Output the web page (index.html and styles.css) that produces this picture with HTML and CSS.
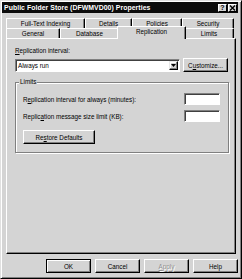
FILE: index.html
```html
<!DOCTYPE html>
<html>
<head>
<meta charset="utf-8">
<link rel="stylesheet" href="styles.css">
</head>
<body>
<div class="window">
  <div class="titlebar">
    <span class="title">Public Folder Store (DFWMVD00) Properties</span>
    <div class="tb-buttons">
      <span class="tb-btn">?</span>
      <span class="tb-btn close">
        <svg width="7" height="6" viewBox="0 0 7 6"><path d="M1 0.5 L6 5.5 M6 0.5 L1 5.5" stroke="#000" stroke-width="1.4"/></svg>
      </span>
    </div>
  </div>
  <div class="tabs">
    <div class="tab-row back">
      <div class="tab t-fti">Full-Text Indexing</div>
      <div class="tab t-det">Details</div>
      <div class="tab t-pol">Policies</div>
      <div class="tab t-sec">Security</div>
    </div>
    <div class="tab-row front">
      <div class="tab t-gen">General</div>
      <div class="tab t-db">Database</div>
      <div class="tab t-rep selected">Replication</div>
      <div class="tab t-lim">Limits</div>
    </div>
  </div>
  <div class="panel">
    <div class="label"><u>R</u>eplication interval:</div>
    <div class="combo-row">
      <div class="combo">
        <span class="combo-text">Always run</span>
        <span class="combo-btn"><svg width="5" height="3" viewBox="0 0 5 3"><path d="M0 0 H5 L2.5 3 Z" fill="#000"/></svg></span>
      </div>
      <div class="btn customize">C<u>u</u>stomize...</div>
    </div>
    <div class="group">
      <span class="group-label">Limits</span>
      <div class="field-row">
        <span>R<u>e</u>plication interval for always (minutes):</span>
        <span class="textbox"></span>
      </div>
      <div class="field-row">
        <span>Replic<u>a</u>tion message size limit (KB):</span>
        <span class="textbox"></span>
      </div>
      <div class="btn restore">Re<u>s</u>tore Defaults</div>
    </div>
  </div>
  <div class="footer">
    <div class="btn dlg default">OK</div>
    <div class="btn dlg">Cancel</div>
    <div class="btn dlg disabled"><u>A</u>pply</div>
    <div class="btn dlg">Help</div>
  </div>
</div>
</body>
</html>
```

FILE: styles.css
```css
* { box-sizing: border-box; }
html, body { margin: 0; padding: 0; background: #d4d4d4; }
body {
  font-family: "Liberation Sans", Arial, sans-serif;
  font-size: 6.3px;
  color: #000;
}
u { text-decoration: underline; text-underline-offset: 1px; }
.window {
  width: 242px;
  height: 279px;
  background: #d4d4d4;
  border-top: 1px solid #e0e0e0;
  border-left: 1px solid #e0e0e0;
  border-right: 1px solid #000;
  border-bottom: 1px solid #000;
  box-shadow: inset 1px 1px 0 #fff, inset -1px -1px 0 #808080;
  padding: 1px 3px 2px 1px;
  display: flex;
  flex-direction: column;
}
.titlebar {
  height: 11px;
  background: #0c0c0c;
  display: flex;
  align-items: center;
  justify-content: space-between;
  padding: 0 1px 0 2px;
}
.title {
  color: #fff;
  font-weight: bold;
  font-size: 6.9px;
  letter-spacing: 0.05px;
}
.tb-buttons { display: flex; gap: 1px; }
.tb-btn {
  width: 9px;
  height: 8px;
  background: #d4d4d4;
  border-top: 1px solid #fff;
  border-left: 1px solid #fff;
  border-right: 1px solid #000;
  border-bottom: 1px solid #000;
  font-weight: bold;
  font-size: 7px;
  line-height: 6px;
  display: flex;
  align-items: center;
  justify-content: center;
}
.tabs {
  margin-top: 5px;
  padding-left: 4px;
  display: flex;
  flex-direction: column;
  position: relative;
  z-index: 1;
}
.tab-row { display: flex; height: 10px; }
.tab {
  height: 10px;
  background: #d4d4d4;
  border-top: 1px solid #fff;
  border-left: 1px solid #fff;
  border-right: 1px solid #000;
  box-shadow: inset -1px 0 0 #808080;
  border-top-left-radius: 1px;
  border-top-right-radius: 1px;
  display: flex;
  align-items: center;
  justify-content: center;
  line-height: 8px;
}
.t-fti { width: 79px; }
.t-det { width: 47px; }
.t-pol { width: 50px; }
.t-sec { width: 52px; }
.t-gen { width: 54px; }
.t-db { width: 59px; }
.t-rep { width: 65px; }
.t-lim { width: 50px; }
.tab.selected {
  height: 13px;
  margin: -2px -2px -1px -2px;
  width: 69px;
  padding-bottom: 2px;
  position: relative;
  z-index: 2;
}
.panel {
  margin-left: 4px;
  width: 230px;
  height: 216px;
  border-top: 1px solid #fff;
  border-left: 1px solid #fff;
  border-right: 1px solid #000;
  border-bottom: 1px solid #000;
  box-shadow: inset -1px -1px 0 #808080;
  padding: 8px 7px 0 8px;
  display: flex;
  flex-direction: column;
}
.label { height: 8px; line-height: 8px; }
.combo-row {
  margin-top: 3px;
  display: flex;
  align-items: center;
  gap: 3px;
}
.combo {
  width: 166px;
  height: 13px;
  background: #fff;
  border-top: 1px solid #808080;
  border-left: 1px solid #808080;
  border-right: 1px solid #fff;
  border-bottom: 1px solid #fff;
  box-shadow: inset 1px 1px 0 #404040;
  display: flex;
  align-items: center;
  justify-content: space-between;
  padding: 0 1px 0 2px;
}
.combo-btn {
  width: 9px;
  height: 9px;
  background: #d4d4d4;
  border-top: 1px solid #e8e8e8;
  border-left: 1px solid #e8e8e8;
  border-right: 1px solid #000;
  border-bottom: 1px solid #000;
  box-shadow: inset -1px -1px 0 #808080, inset 1px 1px 0 #fff;
  display: flex;
  align-items: center;
  justify-content: center;
}
.btn {
  background: #d4d4d4;
  border-top: 1px solid #fff;
  border-left: 1px solid #fff;
  border-right: 1px solid #000;
  border-bottom: 1px solid #000;
  box-shadow: inset -1px -1px 0 #808080;
  display: flex;
  align-items: center;
  justify-content: center;
}
.customize { width: 45px; height: 14px; }
.group {
  margin-top: 10px;
  width: 214px;
  height: 71px;
  border: 1px solid #808080;
  box-shadow: 1px 1px 0 #fff, inset 1px 1px 0 #fff;
  position: relative;
  padding: 10px 8px 0 7px;
  display: flex;
  flex-direction: column;
}
.group-label {
  position: absolute;
  top: -5px;
  left: 3px;
  padding: 0 1px;
  background: #d4d4d4;
  line-height: 8px;
}
.field-row {
  display: flex;
  justify-content: space-between;
  align-items: center;
  height: 12px;
}
.field-row + .field-row { margin-top: 5px; }
.textbox {
  width: 36px;
  height: 12px;
  background: #fff;
  border-top: 1px solid #808080;
  border-left: 1px solid #808080;
  border-right: 1px solid #fff;
  border-bottom: 1px solid #fff;
  box-shadow: inset 1px 1px 0 #404040;
}
.restore {
  margin-top: 8px;
  width: 72px;
  height: 14px;
}
.footer {
  margin-top: 5px;
  display: flex;
  justify-content: flex-end;
  gap: 4px;
  padding-right: 0;
}
.dlg { width: 45px; height: 14px; }
.dlg.default {
  border: 1px solid #000;
  box-shadow: inset 1px 1px 0 #fff, inset -1px -1px 0 #808080;
}
.dlg.disabled { color: #909090; text-shadow: 1px 1px 0 #fff; }
```
